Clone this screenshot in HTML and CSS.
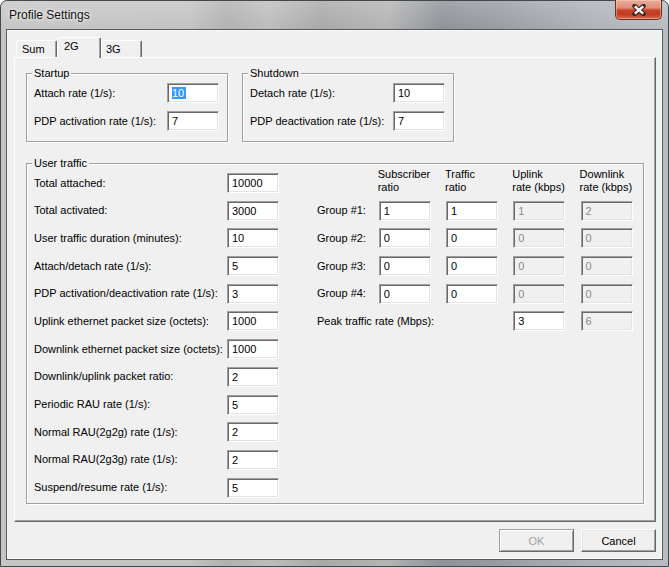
FILE: index.html
```html
<!DOCTYPE html>
<html lang="en">
<head>
<meta charset="utf-8">
<title>Profile Settings</title>
<link rel="stylesheet" href="styles.css">
</head>
<body>
<div class="window">
  <div class="titlebar">
    <span class="title">Profile Settings</span>
    <div class="close" aria-label="Close">
      <svg width="14" height="12" viewBox="0 0 14 12">
        <path d="M2.5 2 L11.5 10 M11.5 2 L2.5 10" stroke="#3a2622" stroke-width="4.4" stroke-linecap="round" fill="none"/>
        <path d="M2.8 2.3 L11.2 9.7 M11.2 2.3 L2.8 9.7" stroke="#ffffff" stroke-width="2.3" stroke-linecap="butt" fill="none"/>
      </svg>
    </div>
  </div>
  <div class="client">
    <div class="tabs">
      <div class="tab tab-sum">Sum</div>
      <div class="tab tab-2g active">2G</div>
      <div class="tab tab-3g">3G</div>
    </div>
    <div class="panel">
      <div class="top-groups">
        <fieldset class="group group-startup">
          <legend>Startup</legend>
          <div class="form form-startup">
            <label>Attach rate (1/s):</label><div class="field"><span class="sel">10</span></div>
            <label>PDP activation rate (1/s):</label><div class="field">7</div>
          </div>
        </fieldset>
        <fieldset class="group group-shutdown">
          <legend>Shutdown</legend>
          <div class="form form-shutdown">
            <label>Detach rate (1/s):</label><div class="field">10</div>
            <label>PDP deactivation rate (1/s):</label><div class="field">7</div>
          </div>
        </fieldset>
      </div>
      <fieldset class="group group-traffic">
        <legend>User traffic</legend>
        <div class="traffic">
          <div class="form form-traffic">
            <label>Total attached:</label><div class="field">10000</div>
            <label>Total activated:</label><div class="field">3000</div>
            <label>User traffic duration (minutes):</label><div class="field">10</div>
            <label>Attach/detach rate (1/s):</label><div class="field">5</div>
            <label>PDP activation/deactivation rate (1/s):</label><div class="field">3</div>
            <label>Uplink ethernet packet size (octets):</label><div class="field">1000</div>
            <label>Downlink ethernet packet size (octets):</label><div class="field">1000</div>
            <label>Downlink/uplink packet ratio:</label><div class="field">2</div>
            <label>Periodic RAU rate (1/s):</label><div class="field">5</div>
            <label>Normal RAU(2g2g) rate (1/s):</label><div class="field">2</div>
            <label>Normal RAU(2g3g) rate (1/s):</label><div class="field">2</div>
            <label>Suspend/resume rate (1/s):</label><div class="field">5</div>
          </div>
          <div class="groups-grid">
            <div class="col-head first">Subscriber<br>ratio</div>
            <div class="col-head">Traffic<br>ratio</div>
            <div class="col-head">Uplink<br>rate (kbps)</div>
            <div class="col-head">Downlink<br>rate (kbps)</div>

            <label>Group #1:</label>
            <div class="field">1</div><div class="field">1</div>
            <div class="field dis">1</div><div class="field dis">2</div>

            <label>Group #2:</label>
            <div class="field">0</div><div class="field">0</div>
            <div class="field dis">0</div><div class="field dis">0</div>

            <label>Group #3:</label>
            <div class="field">0</div><div class="field">0</div>
            <div class="field dis">0</div><div class="field dis">0</div>

            <label>Group #4:</label>
            <div class="field">0</div><div class="field">0</div>
            <div class="field dis">0</div><div class="field dis">0</div>

            <label class="peak">Peak traffic rate (Mbps):</label>
            <div class="field">3</div><div class="field dis">6</div>
          </div>
        </div>
      </fieldset>
    </div>
    <div class="buttons">
      <button class="btn btn-ok" disabled>OK</button>
      <button class="btn">Cancel</button>
    </div>
  </div>
</div>
</body>
</html>
```

FILE: styles.css
```css
* { box-sizing: border-box; }
html, body { margin: 0; padding: 0; }
body {
  width: 669px;
  height: 567px;
  overflow: hidden;
  font-family: "Liberation Sans", Arial, sans-serif;
  font-size: 11px;
  color: #000;
  background: #ffffff;
}

.window {
  width: 669px;
  height: 567px;
  display: flex;
  flex-direction: column;
  border: 1px solid #44484d;
  border-radius: 7px 7px 0 0;
  padding: 0 5px 6px;
  background:
    linear-gradient(180deg, rgba(255,255,255,0.18) 0px, rgba(255,255,255,0) 28px),
    linear-gradient(90deg, #c5c5c5 0%, #c3c3c3 28%, #b1b1b1 34%, #bdbdbd 40%, #a9a9a9 48%, #b4b4b4 58%, #8f9297 66%, #989ca1 74%, #aeb2b7 88%, #b8bcc1 100%);
}

.titlebar {
  height: 28px;
  flex: none;
  display: flex;
  justify-content: space-between;
  align-items: flex-start;
  margin: 0 -5px;
  padding: 0 6px 0 8px;
}
.title {
  font-size: 12px;
  line-height: 14px;
  margin-top: 7px;
  color: #111;
  text-shadow: 0 0 6px rgba(255,255,255,0.9), 0 0 3px rgba(255,255,255,0.8);
}
.close {
  width: 47px;
  height: 20px;
  margin-top: -1px;
  border: 1px solid #6a2e24;
  border-top: 0;
  border-radius: 0 0 5px 5px;
  background: linear-gradient(180deg, #e9ae9f 0%, #df8c77 42%, #c7472d 52%, #c23b21 75%, #d66b4d 100%);
  box-shadow: inset 0 0 0 1px rgba(255,210,190,0.45);
  display: flex;
  align-items: center;
  justify-content: center;
}
.close svg { display: block; margin-left: 1px; }

.client {
  flex: 1;
  display: flex;
  flex-direction: column;
  border: 1px solid #565a60;
  box-shadow: inset 0 0 0 1px #f9f9f9;
  background: #f0f0f0;
  padding: 7px 6px 7px 7px;
}

.tabs {
  display: flex;
  align-items: flex-end;
  height: 20px;
  margin-left: 2px;
  position: relative;
  z-index: 1;
}
.tab {
  height: 17px;
  padding-left: 5px;
  border: 1px solid #ffffff;
  border-right-color: #696969;
  border-bottom: 0;
  border-radius: 2px 2px 0 0;
  box-shadow: inset -1px 0 0 #a0a0a0;
  background: #f0f0f0;
  line-height: 16px;
  white-space: nowrap;
}
.tab-sum { width: 41px; }
.tab-3g { width: 41px; padding-left: 4px; }
.tab.active {
  width: 44px;
  height: 21px;
  padding-left: 6px;
  margin-bottom: -1px;
  line-height: 17px;
}

.panel {
  flex: 1;
  border: 1px solid;
  border-color: #ffffff #696969 #696969 #ffffff;
  box-shadow: inset -1px -1px 0 #a0a0a0;
  padding: 9px 11px 0 11px;
}

.top-groups {
  display: flex;
  gap: 14px;
}

.group {
  margin: 0;
  min-width: 0;
  border: 1px solid #a0a0a0;
  box-shadow: inset 1px 1px 0 #ffffff, 1px 1px 0 #ffffff;
}
.group legend {
  padding: 0 2px;
  margin-left: -2px;
  line-height: 13px;
  background: #f0f0f0;
}
.group-startup { width: 202px; padding: 3px 8px 10px 7px; }
.group-shutdown { width: 212px; padding: 3px 8px 10px 7px; }
.group-traffic { margin-top: 15px; padding: 3px 8px 5px 7px; }

.form {
  display: grid;
  grid-auto-rows: 20px;
  align-items: center;
}
.form-startup { grid-template-columns: 133px 52px; row-gap: 8px; }
.form-shutdown { grid-template-columns: 143px 52px; row-gap: 8px; }
.form-traffic { grid-template-columns: 193px 52px; row-gap: 7.7px; }

label {
  display: block;
  white-space: nowrap;
  line-height: 13px;
}

.field {
  width: 52px;
  height: 20px;
  border: 1px solid;
  border-color: #a0a0a0 #ffffff #ffffff #a0a0a0;
  box-shadow: inset 1px 1px 0 #696969, inset -1px -1px 0 #e3e3e3;
  background: #ffffff;
  padding: 0 4px;
  line-height: 18px;
  white-space: nowrap;
  overflow: hidden;
}
.field.dis {
  background: #f0f0f0;
  color: #8a8a8a;
}
.sel {
  display: inline-block;
  background: #3399ff;
  color: #ffffff;
  line-height: 12px;
  padding-right: 2px;
  vertical-align: middle;
  margin-top: -2px;
}

.traffic {
  display: flex;
  align-items: flex-start;
}
.groups-grid {
  margin-left: 38px;
  display: grid;
  grid-template-columns: 46.4px 52px 52px 52px 52px;
  grid-template-rows: repeat(6, 20px);
  column-gap: 15.3px;
  row-gap: 7.7px;
  align-items: center;
}
.col-head {
  line-height: 13px;
  white-space: nowrap;
  align-self: end;
  margin-bottom: -1px;
  margin-left: -1px;
}
.col-head.first { grid-column-start: 2; }
.peak { grid-column: 1 / span 3; }

.buttons {
  display: flex;
  justify-content: flex-end;
  gap: 7px;
  margin-top: 7px;
}
.btn {
  width: 75px;
  height: 23px;
  padding: 0;
  font: inherit;
  color: #000;
  background: #f0f0f0;
  border: 1px solid;
  border-color: #ffffff #696969 #696969 #ffffff;
  box-shadow: inset -1px -1px 0 #a0a0a0, inset 1px 1px 0 #e3e3e3;
}
.btn-ok {
  color: #a0a0a0;
  border-color: #a0a0a0 #696969 #696969 #a0a0a0;
  box-shadow: inset 1px 1px 0 #ffffff, inset -1px -1px 0 #a0a0a0;
}
```
